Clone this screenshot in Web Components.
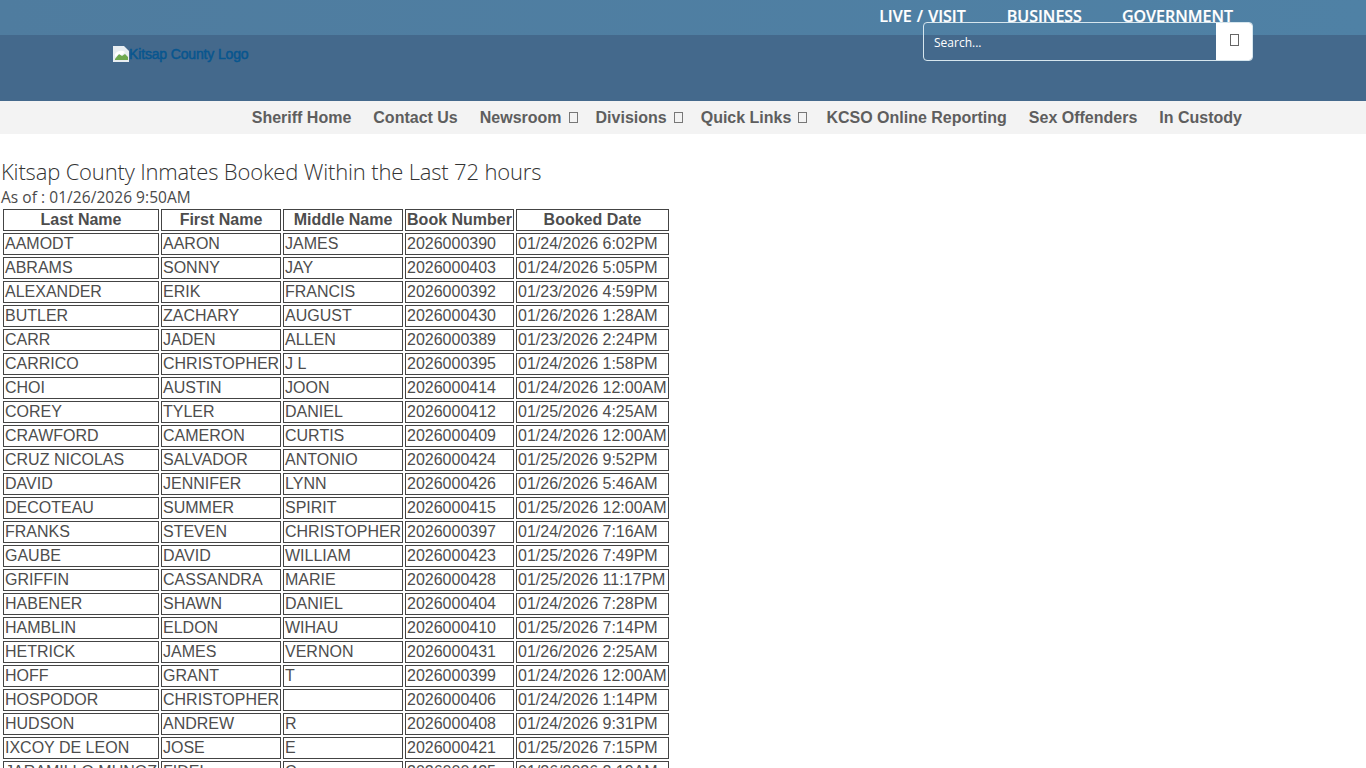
<!DOCTYPE html>
<html lang="en">
<head>
<meta charset="utf-8">
<title>Kitsap County Inmates</title>
<style>
html { overflow: hidden; }
body { margin: 0; background: #fff; font-family: "Open Sans", sans-serif; }
</style>
</head>
<body>
<site-header></site-header>
<main-nav></main-nav>
<inmate-report></inmate-report>

<script>
class SiteHeader extends HTMLElement {
    constructor() {
        super();
        this.shadowDOM = this.attachShadow({mode: "open"});
    }

    connectedCallback() {
        this.shadowDOM.innerHTML = `
            <style>
            :host {
                display: block;
                height: 101px;
                background: #44698c;
                font-family: "Open Sans", sans-serif;
            }
            .top {
                height: 35px;
                box-sizing: border-box;
                background: linear-gradient(90deg, #4f7c9f, #4f81a5);
                display: flex;
                justify-content: flex-end;
                gap: 40px;
                padding: 5px 133px 0 0;
            }
            .top a {
                color: #fff;
                font-size: 16px;
                font-weight: 600;
                line-height: 22px;
                word-spacing: 1px;
                -webkit-text-stroke: 0.2px #fff;
                text-decoration: none;
            }
            .top a:first-child { margin-right: 1px; }
            .main {
                display: flex;
                justify-content: space-between;
                padding: 0 113px;
            }
            .logo {
                display: flex;
                align-items: center;
                height: 16px;
                margin-top: 11px;
                font-family: "Liberation Sans", sans-serif;
                font-size: 14px;
                line-height: 16px;
                letter-spacing: -0.15px;
                color: #08568f;
                -webkit-text-stroke: 0.5px #08568f;
            }
            .logo svg { flex: none; }
            .search {
                position: relative;
                top: -13px;
                display: flex;
                width: 330px;
                height: 39px;
                box-sizing: border-box;
                border: 1px solid #d6e6ee;
                border-radius: 4px;
            }
            .search .field {
                flex: 1;
                padding-left: 10px;
                color: #fff;
                font-size: 12px;
                line-height: 39px;
            }
            .search .btn {
                width: 36px;
                background: #fff;
                border-radius: 0 3px 3px 0;
                display: flex;
                justify-content: center;
                padding-top: 11px;
                box-sizing: border-box;
            }
            </style>
            <div class="top">
                <a>LIVE / VISIT</a>
                <a>BUSINESS</a>
                <a>GOVERNMENT</a>
            </div>
            <div class="main">
                <a class="logo">
                    <svg width="16" height="16" viewBox="0 0 16 16">
                        <path d="M0 0h11l5 5v11H0z" fill="#e8eef2"/>
                        <path d="M2 13l4-5 3 2 3-2 3 3v3H2z" fill="#6fa84f"/>
                        <path d="M2 8c3-4 7-4 10-2l-3 3-3-1-4 3z" fill="#fff"/>
                    </svg>
                    <span>Kitsap County Logo</span>
                </a>
                <div class="search">
                    <div class="field">Search...</div>
                    <div class="btn">
                        <svg width="9" height="12" viewBox="0 0 9 12"><rect x="0.5" y="0.5" width="8" height="11" fill="none" stroke="#666"/></svg>
                    </div>
                </div>
            </div>`;
    }
}

class MainNav extends HTMLElement {
    constructor() {
        super();
        this.shadowDOM = this.attachShadow({mode: "open"});
    }

    connectedCallback() {
        this.shadowDOM.innerHTML = `
            <style>
            :host {
                display: flex;
                justify-content: flex-end;
                align-items: center;
                height: 33px;
                padding-right: 124px;
                background: #f3f3f3;
                font-family: "Liberation Sans", sans-serif;
                font-size: 16px;
                font-weight: 700;
                color: #5e5e5e;
            }
            a { margin-left: 22px; white-space: nowrap; }
            a.drop { display: flex; align-items: center; margin-left: 22px; }
            a.drop + a.drop { margin-left: 18px; }
            a.drop + a:not(.drop) { margin-left: 19px; }
            svg { margin-left: 7px; }
            </style>
            <a>Sheriff Home</a>
            <a>Contact Us</a>
            <a class="drop">Newsroom${MainNav.box}</a>
            <a class="drop">Divisions${MainNav.box}</a>
            <a class="drop">Quick Links${MainNav.box}</a>
            <a>KCSO Online Reporting</a>
            <a>Sex Offenders</a>
            <a>In Custody</a>`;
    }
}
MainNav.box = `<svg width="9" height="11" viewBox="0 0 9 11"><rect x="0.5" y="0.5" width="8" height="10" fill="none" stroke="#777"/></svg>`;

class InmateReport extends HTMLElement {
    constructor() {
        super();
        this.shadowDOM = this.attachShadow({mode: "open"});
    }

    connectedCallback() {
        const rows = [
            ["AAMODT", "AARON", "JAMES", "2026000390", "01/24/2026 6:02PM"],
            ["ABRAMS", "SONNY", "JAY", "2026000403", "01/24/2026 5:05PM"],
            ["ALEXANDER", "ERIK", "FRANCIS", "2026000392", "01/23/2026 4:59PM"],
            ["BUTLER", "ZACHARY", "AUGUST", "2026000430", "01/26/2026 1:28AM"],
            ["CARR", "JADEN", "ALLEN", "2026000389", "01/23/2026 2:24PM"],
            ["CARRICO", "CHRISTOPHER", "J L", "2026000395", "01/24/2026 1:58PM"],
            ["CHOI", "AUSTIN", "JOON", "2026000414", "01/24/2026 12:00AM"],
            ["COREY", "TYLER", "DANIEL", "2026000412", "01/25/2026 4:25AM"],
            ["CRAWFORD", "CAMERON", "CURTIS", "2026000409", "01/24/2026 12:00AM"],
            ["CRUZ NICOLAS", "SALVADOR", "ANTONIO", "2026000424", "01/25/2026 9:52PM"],
            ["DAVID", "JENNIFER", "LYNN", "2026000426", "01/26/2026 5:46AM"],
            ["DECOTEAU", "SUMMER", "SPIRIT", "2026000415", "01/25/2026 12:00AM"],
            ["FRANKS", "STEVEN", "CHRISTOPHER", "2026000397", "01/24/2026 7:16AM"],
            ["GAUBE", "DAVID", "WILLIAM", "2026000423", "01/25/2026 7:49PM"],
            ["GRIFFIN", "CASSANDRA", "MARIE", "2026000428", "01/25/2026 11:17PM"],
            ["HABENER", "SHAWN", "DANIEL", "2026000404", "01/24/2026 7:28PM"],
            ["HAMBLIN", "ELDON", "WIHAU", "2026000410", "01/25/2026 7:14PM"],
            ["HETRICK", "JAMES", "VERNON", "2026000431", "01/26/2026 2:25AM"],
            ["HOFF", "GRANT", "T", "2026000399", "01/24/2026 12:00AM"],
            ["HOSPODOR", "CHRISTOPHER", "", "2026000406", "01/24/2026 1:14PM"],
            ["HUDSON", "ANDREW", "R", "2026000408", "01/24/2026 9:31PM"],
            ["IXCOY DE LEON", "JOSE", "E", "2026000421", "01/25/2026 7:15PM"],
            ["JARAMILLO MUNOZ", "FIDEL", "C", "2026000425", "01/26/2026 2:19AM"]
        ];
        const body = rows.map(r => `<tr>${r.map(c => `<td>${c || "&nbsp;"}</td>`).join("")}</tr>`).join("");

        this.shadowDOM.innerHTML = `
            <style>
            :host {
                display: block;
                padding: 22px 0 0 1px;
                font-family: "Open Sans", sans-serif;
                color: #4a4a4a;
            }
            h1 {
                margin: 0;
                font-size: 22px;
                font-weight: 300;
                letter-spacing: -0.17px;
                line-height: 31px;
                color: #333;
            }
            p {
                margin: 0;
                font-size: 15.5px;
                letter-spacing: 0.05px;
                line-height: 20px;
            }
            table {
                border-spacing: 2px;
                border-collapse: separate;
                table-layout: fixed;
                width: 670px;
                font-family: "Liberation Sans", sans-serif;
                font-size: 16px;
                line-height: 18px;
                color: #4d4d4d;
            }
            th, td {
                border: 1px solid #444;
                padding: 1px;
                white-space: nowrap;
                overflow: hidden;
            }
            th { text-align: center; }
            </style>
            <h1>Kitsap County Inmates Booked Within the Last 72 hours</h1>
            <p>As of : 01/26/2026 9:50AM</p>
            <table>
                <colgroup>
                    <col style="width:156px"><col style="width:120px"><col style="width:120px"><col style="width:109px"><col style="width:153px">
                </colgroup>
                <thead>
                    <tr><th>Last Name</th><th>First Name</th><th>Middle Name</th><th>Book Number</th><th>Booked Date</th></tr>
                </thead>
                <tbody>${body}</tbody>
            </table>`;
    }
}

customElements.define("site-header", SiteHeader);
customElements.define("main-nav", MainNav);
customElements.define("inmate-report", InmateReport);
</script>
</body>
</html>
